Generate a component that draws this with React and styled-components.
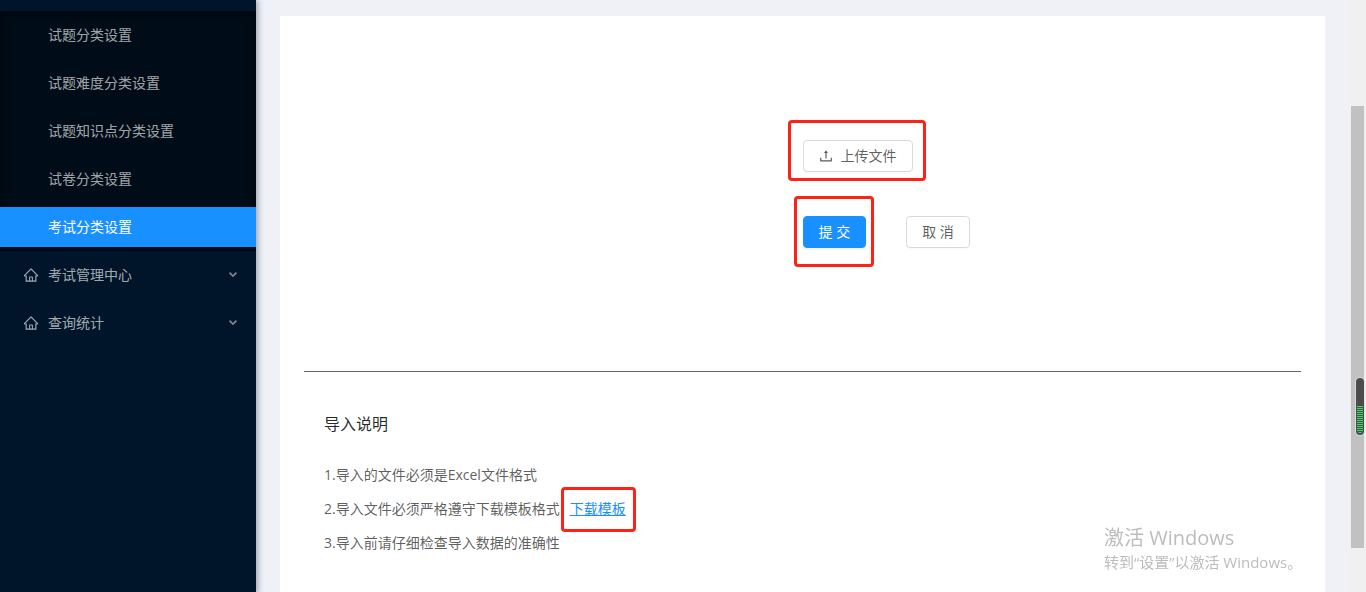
import React from "react";
import styled, { createGlobalStyle, css } from "styled-components";
import { AiOutlineHome, AiOutlineUpload } from "react-icons/ai";

const GlobalStyle = createGlobalStyle`
  *, *::before, *::after { box-sizing: border-box; }
  body {
    margin: 0;
    background: #f0f1f6;
    color: rgba(0, 0, 0, 0.65);
    font: 14px/22px "Open Sans", "Noto Sans CJK SC", sans-serif;
  }
`;

const Page = styled.div`
  display: flex;
  min-height: 100vh;
`;

const Sider = styled.aside`
  flex: 0 0 256px;
  padding-top: 11px;
  background: #001529;
  box-shadow: 2px 0 6px rgba(0, 21, 41, 0.35);
  z-index: 1;
`;

const Menu = styled.ul`
  margin: 0;
  padding: 0;
  list-style: none;
`;

const SubMenu = styled(Menu)`
  padding: 4px 0;
  display: flex;
  flex-direction: column;
  gap: 8px;
  background: #000c17;
  box-shadow: inset 0 2px 8px rgba(0, 0, 0, 0.45);
`;

const MenuLink = styled.a`
  display: block;
  padding-left: 48px;
  line-height: 40px;
  text-decoration: none;
  color: ${(p) => (p.$active ? "#fff" : "rgba(255, 255, 255, 0.65)")};
  background: ${(p) => (p.$active ? "#1890ff" : "transparent")};
`;

const GroupTitle = styled.button`
  display: flex;
  align-items: center;
  gap: 9px;
  width: 100%;
  height: 40px;
  margin: 4px 0 8px;
  padding: 0 18px 0 23px;
  border: 0;
  background: none;
  color: rgba(255, 255, 255, 0.65);
  font: inherit;
  text-align: left;
  cursor: pointer;
`;

const GroupLabel = styled.span`
  flex: 1;
`;

const Main = styled.main`
  flex: 1;
  min-width: 0;
  display: flex;
  padding: 16px 24px 0;
`;

const Card = styled.section`
  flex: 1;
  padding: 24px;
  background: #fff;
`;

const ImportForm = styled.form`
  display: flex;
  flex-direction: column;
  align-items: flex-start;
  gap: 44px;
  padding: 100px 0 123px 50%;
`;

const Actions = styled.div`
  display: flex;
  gap: 40px;
`;

const outline = css`
  content: "";
  position: absolute;
  border: 3px solid #ff2116;
  border-radius: 4px;
  pointer-events: none;
`;

const Marked = styled.span`
  position: relative;
  display: inline-flex;
  &::after {
    ${outline}
    inset: ${(p) => p.$spread};
  }
`;

const Button = styled.button`
  display: inline-flex;
  align-items: center;
  justify-content: center;
  gap: 7px;
  height: 32px;
  padding: 0 15px 0 ${(p) => (p.$withIcon ? 14 : 15)}px;
  border: 1px solid ${(p) => (p.$primary ? "#1890ff" : "#d9d9d9")};
  border-radius: 4px;
  background: ${(p) => (p.$primary ? "#1890ff" : "#fff")};
  color: ${(p) => (p.$primary ? "#fff" : "rgba(0, 0, 0, 0.65)")};
  box-shadow: 0 2px 0 rgba(0, 0, 0, ${(p) => (p.$primary ? 0.04 : 0.015)});
  font: inherit;
  white-space: nowrap;
  cursor: pointer;
`;

const Divider = styled.hr`
  margin: 0;
  border: 0;
  border-top: 1px solid #666;
`;

const Notes = styled.section`
  padding: 40px 20px 10px;
`;

const NotesTitle = styled.h2`
  margin: 0 0 22px;
  color: rgba(0, 0, 0, 0.85);
  font-size: 16px;
  font-weight: 400;
  line-height: 24px;
`;

const Note = styled.p`
  margin: 0;
  line-height: 34px;
`;

const Download = styled.a`
  margin-left: 10px;
  color: #1890ff;
  line-height: 22px;
  text-decoration: underline;
`;

const ScrollTrack = styled.div`
  flex: 0 0 17px;
  padding: 106px 2px 0;
  background: #f0f0f0;
`;

const ScrollThumb = styled.div`
  height: 442px;
  background: #c1c1c1;
`;

const Gauge = styled.div`
  position: fixed;
  top: 378px;
  right: 2px;
  width: 8px;
  height: 57px;
  padding: 28px 1px 2px;
  border-radius: 4px;
  background: #4c4c4c;
  box-shadow: 0 0 0 1px rgba(225, 225, 225, 0.8);
`;

const GaugeLevel = styled.div`
  height: 27px;
  border-radius: 0 0 3px 3px;
  background: repeating-linear-gradient(#2fe060 0 1px, #4c4c4c 1px 2px);
`;

const Watermark = styled.div`
  position: fixed;
  right: 62px;
  bottom: 19px;
  width: 200px;
  color: #bcbcbc;
  font-size: 15px;
  line-height: 22px;
  white-space: nowrap;
  pointer-events: none;
`;

const WatermarkTitle = styled.div`
  font-size: 20px;
  line-height: 26px;
`;

const categories = [
  "试题分类设置",
  "试题难度分类设置",
  "试题知识点分类设置",
  "试卷分类设置",
  "考试分类设置",
];

const groups = ["考试管理中心", "查询统计"];

function Chevron() {
  return (
    <svg width="10" height="10" viewBox="0 0 10 10" fill="none" stroke="currentColor" strokeWidth="1.8" opacity="0.75" aria-hidden="true">
      <path d="M1.5 2.7L5 6.1L8.5 2.7" />
    </svg>
  );
}

export default function App() {
  return (
    <>
      <GlobalStyle />
      <Page>
        <Sider>
          <nav>
            <SubMenu>
              {categories.map((name, i) => (
                <li key={name}>
                  <MenuLink href="#" $active={i === categories.length - 1}>
                    {name}
                  </MenuLink>
                </li>
              ))}
            </SubMenu>
            <Menu>
              {groups.map((name) => (
                <li key={name}>
                  <GroupTitle type="button">
                    <AiOutlineHome size={16} aria-hidden="true" />
                    <GroupLabel>{name}</GroupLabel>
                    <Chevron />
                  </GroupTitle>
                </li>
              ))}
            </Menu>
          </nav>
        </Sider>
        <Main>
          <Card>
            <ImportForm onSubmit={(e) => e.preventDefault()}>
              <Marked $spread="-20px -13px -9px -15px">
                <Button type="button" $withIcon>
                  <AiOutlineUpload size={16} aria-hidden="true" />
                  上传文件
                </Button>
              </Marked>
              <Actions>
                <Marked $spread="-20px -8px -19px -9px">
                  <Button type="submit" $primary>提 交</Button>
                </Marked>
                <Button type="button">取 消</Button>
              </Actions>
            </ImportForm>
            <Divider />
            <Notes>
              <NotesTitle>导入说明</NotesTitle>
              <Note>1.导入的文件必须是Excel文件格式</Note>
              <Note>
                2.导入文件必须严格遵守下载模板格式
                <Marked $spread="-11px -10px -12px 1px">
                  <Download href="#">下载模板</Download>
                </Marked>
              </Note>
              <Note>3.导入前请仔细检查导入数据的准确性</Note>
            </Notes>
          </Card>
        </Main>
        <ScrollTrack>
          <ScrollThumb />
        </ScrollTrack>
      </Page>
      <Gauge>
        <GaugeLevel />
      </Gauge>
      <Watermark>
        <WatermarkTitle>激活 Windows</WatermarkTitle>
        转到“设置”以激活 Windows。
      </Watermark>
    </>
  );
}
